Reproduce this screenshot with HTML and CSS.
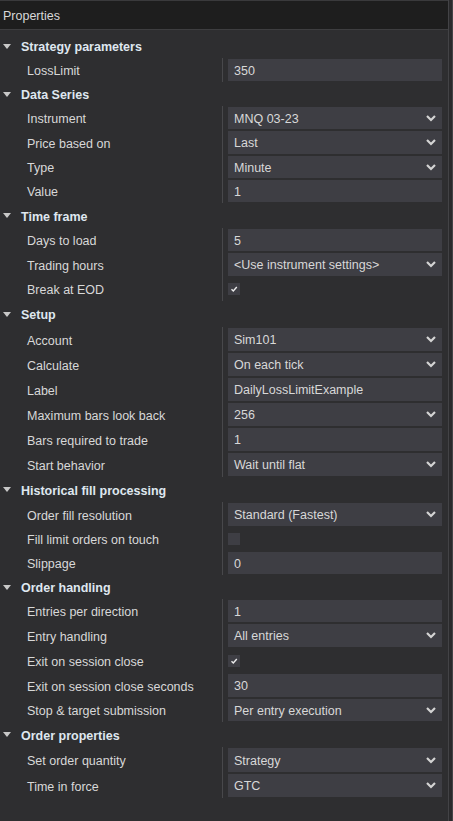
FILE: index.html
```html
<!DOCTYPE html>
<html>
<head>
<meta charset="utf-8">
<link rel="stylesheet" href="styles.css">
</head>
<body>
<div class="window">
  <div class="panel">
    <div class="header">Properties</div>
    <div class="list">
      <div class="cat"><span class="tri"></span>Strategy parameters</div>
      <div class="row"><div class="label">LossLimit</div><div class="val"><div class="box">350</div></div></div>

      <div class="cat"><span class="tri"></span>Data Series</div>
      <div class="row"><div class="label">Instrument</div><div class="val"><div class="box dd">MNQ 03-23<svg class="chev" viewBox="0 0 10 7"><polyline points="1,1 5,5 9,1"/></svg></div></div></div>
      <div class="row h25"><div class="label">Price based on</div><div class="val"><div class="box dd">Last<svg class="chev" viewBox="0 0 10 7"><polyline points="1,1 5,5 9,1"/></svg></div></div></div>
      <div class="row"><div class="label">Type</div><div class="val"><div class="box dd">Minute<svg class="chev" viewBox="0 0 10 7"><polyline points="1,1 5,5 9,1"/></svg></div></div></div>
      <div class="row"><div class="label">Value</div><div class="val"><div class="box">1</div></div></div>

      <div class="cat h25"><span class="tri"></span>Time frame</div>
      <div class="row"><div class="label">Days to load</div><div class="val"><div class="box">5</div></div></div>
      <div class="row h25"><div class="label">Trading hours</div><div class="val"><div class="box dd">&lt;Use instrument settings&gt;<svg class="chev" viewBox="0 0 10 7"><polyline points="1,1 5,5 9,1"/></svg></div></div></div>
      <div class="row"><div class="label">Break at EOD</div><div class="val"><div class="check"><svg viewBox="0 0 12 12"><polyline points="3.5,6.2 5.3,8 8.8,4"/></svg></div></div></div>

      <div class="cat h26"><span class="tri"></span>Setup</div>
      <div class="row h25"><div class="label">Account</div><div class="val"><div class="box dd">Sim101<svg class="chev" viewBox="0 0 10 7"><polyline points="1,1 5,5 9,1"/></svg></div></div></div>
      <div class="row h25"><div class="label">Calculate</div><div class="val"><div class="box dd">On each tick<svg class="chev" viewBox="0 0 10 7"><polyline points="1,1 5,5 9,1"/></svg></div></div></div>
      <div class="row h25"><div class="label">Label</div><div class="val"><div class="box">DailyLossLimitExample</div></div></div>
      <div class="row h25"><div class="label">Maximum bars look back</div><div class="val"><div class="box dd">256<svg class="chev" viewBox="0 0 10 7"><polyline points="1,1 5,5 9,1"/></svg></div></div></div>
      <div class="row h25"><div class="label">Bars required to trade</div><div class="val"><div class="box">1</div></div></div>
      <div class="row h25"><div class="label">Start behavior</div><div class="val"><div class="box dd">Wait until flat<svg class="chev" viewBox="0 0 10 7"><polyline points="1,1 5,5 9,1"/></svg></div></div></div>

      <div class="cat h25"><span class="tri"></span>Historical fill processing</div>
      <div class="row h25"><div class="label">Order fill resolution</div><div class="val"><div class="box dd">Standard (Fastest)<svg class="chev" viewBox="0 0 10 7"><polyline points="1,1 5,5 9,1"/></svg></div></div></div>
      <div class="row"><div class="label">Fill limit orders on touch</div><div class="val"><div class="check"></div></div></div>
      <div class="row"><div class="label">Slippage</div><div class="val"><div class="box">0</div></div></div>

      <div class="cat"><span class="tri"></span>Order handling</div>
      <div class="row"><div class="label">Entries per direction</div><div class="val"><div class="box">1</div></div></div>
      <div class="row h25"><div class="label">Entry handling</div><div class="val"><div class="box dd">All entries<svg class="chev" viewBox="0 0 10 7"><polyline points="1,1 5,5 9,1"/></svg></div></div></div>
      <div class="row h25"><div class="label">Exit on session close</div><div class="val"><div class="check"><svg viewBox="0 0 12 12"><polyline points="3.5,6.2 5.3,8 8.8,4"/></svg></div></div></div>
      <div class="row h25"><div class="label">Exit on session close seconds</div><div class="val"><div class="box">30</div></div></div>
      <div class="row"><div class="label">Stop &amp; target submission</div><div class="val"><div class="box dd">Per entry execution<svg class="chev" viewBox="0 0 10 7"><polyline points="1,1 5,5 9,1"/></svg></div></div></div>

      <div class="cat h25"><span class="tri"></span>Order properties</div>
      <div class="row h26"><div class="label">Set order quantity</div><div class="val"><div class="box dd">Strategy<svg class="chev" viewBox="0 0 10 7"><polyline points="1,1 5,5 9,1"/></svg></div></div></div>
      <div class="row h25"><div class="label">Time in force</div><div class="val"><div class="box dd">GTC<svg class="chev" viewBox="0 0 10 7"><polyline points="1,1 5,5 9,1"/></svg></div></div></div>
    </div>
  </div>
  <div class="edge"></div>
</div>
</body>
</html>
```

FILE: styles.css
```css
html, body {
  margin: 0;
  padding: 0;
  height: 100%;
  background: #2e2e30;
}
body {
  font-family: "Liberation Sans", Arial, sans-serif;
  font-size: 12.5px;
  color: #d8d8d8;
}
.window {
  display: flex;
  height: 821px;
  overflow: hidden;
}
.panel {
  width: 448px;
  display: flex;
  flex-direction: column;
  background: #2e2e30;
}
.edge {
  width: 5px;
  border-left: 1px solid #434346;
  border-right: 1px solid #434346;
  box-sizing: border-box;
  background: #2a2a2c;
}
.header {
  height: 27px;
  border-top: 1px solid #3a3a3c;
  border-bottom: 1px solid #3e3e40;
  background: #1e1e1e;
  display: flex;
  align-items: center;
  padding-left: 3px;
  padding-top: 1px;
  box-sizing: content-box;
  color: #d8d8d8;
}
.list {
  padding-top: 4px;
  display: flex;
  flex-direction: column;
}
.cat {
  height: 24px;
  display: flex;
  align-items: center;
  font-weight: bold;
  color: #dfe7ef;
  padding-left: 3px;
  padding-top: 2px;
  box-sizing: border-box;
}
.tri {
  width: 0;
  height: 0;
  border-left: 4.5px solid transparent;
  border-right: 4.5px solid transparent;
  border-top: 5px solid #c8c8c8;
  margin-right: 10px;
  margin-top: -2px;
}
.row {
  height: 24px;
  display: grid;
  grid-template-columns: 222px 1px 1fr;
}
.h25 { height: 25px; }
.h26 { height: 26px; }
.row::before {
  content: "";
  grid-column: 2;
  grid-row: 1;
  background: #48484b;
}
.row .label {
  grid-column: 1;
  grid-row: 1;
  padding-left: 27px;
  padding-top: 2px;
  display: flex;
  align-items: center;
}
.row .val {
  grid-column: 3;
  grid-row: 1;
  display: flex;
  align-items: center;
  padding-left: 5px;
  padding-right: 6px;
}
.box {
  flex: 1;
  height: calc(100% - 2px);
  background: #3e3e44;
  display: flex;
  align-items: center;
  padding-left: 6px;
  padding-top: 1px;
  box-sizing: border-box;
  color: #d8d8d8;
}
.box.dd { justify-content: space-between; padding-right: 6px; }
.chev {
  width: 10px;
  height: 7px;
  margin-top: -1px;
}
.chev polyline {
  fill: none;
  stroke: #d4d4d4;
  stroke-width: 2.2;
}
.check {
  width: 12px;
  height: 12px;
  background: #3e3e44;
}
.check svg { width: 12px; height: 12px; display: block; }
.check polyline {
  fill: none;
  stroke: #ececec;
  stroke-width: 1.4;
}
```
